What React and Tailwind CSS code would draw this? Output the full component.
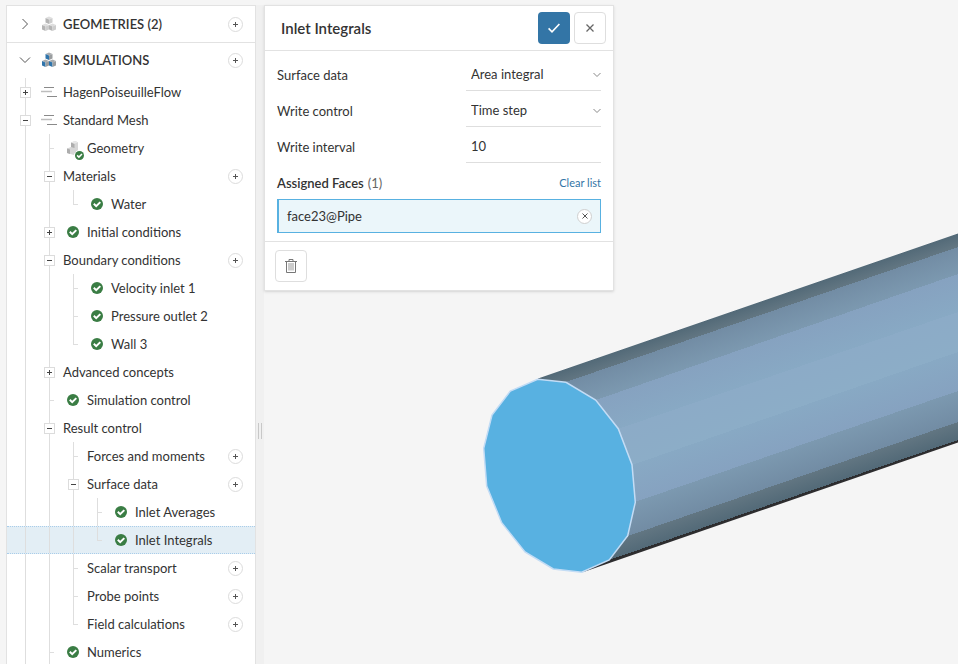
import React from 'react';

const treeItems = [
  { label: 'HagenPoiseuilleFlow', guides: [], depth: 0, toggle: 'plus', icon: 'lines' },
  { label: 'Standard Mesh', guides: [], depth: 0, toggle: 'minus', icon: 'lines' },
  { label: 'Geometry', guides: [0], depth: 1, icon: 'cube' },
  { label: 'Materials', guides: [0], depth: 1, toggle: 'minus', add: true },
  { label: 'Water', guides: [0, 1], depth: 2, icon: 'check', last: true },
  { label: 'Initial conditions', guides: [0], depth: 1, toggle: 'plus', icon: 'check' },
  { label: 'Boundary conditions', guides: [0], depth: 1, toggle: 'minus', add: true },
  { label: 'Velocity inlet 1', guides: [0, 1], depth: 2, icon: 'check' },
  { label: 'Pressure outlet 2', guides: [0, 1], depth: 2, icon: 'check' },
  { label: 'Wall 3', guides: [0, 1], depth: 2, icon: 'check', last: true },
  { label: 'Advanced concepts', guides: [0], depth: 1, toggle: 'plus' },
  { label: 'Simulation control', guides: [0], depth: 1, icon: 'check' },
  { label: 'Result control', guides: [0], depth: 1, toggle: 'minus' },
  { label: 'Forces and moments', guides: [0, 1], depth: 2, add: true },
  { label: 'Surface data', guides: [0, 1], depth: 2, toggle: 'minus', add: true },
  { label: 'Inlet Averages', guides: [0, 1, 2], depth: 3, icon: 'check' },
  { label: 'Inlet Integrals', guides: [0, 1, 2], depth: 3, icon: 'check', last: true, selected: true },
  { label: 'Scalar transport', guides: [0, 1], depth: 2, add: true },
  { label: 'Probe points', guides: [0, 1], depth: 2, add: true },
  { label: 'Field calculations', guides: [0, 1], depth: 2, add: true, last: true },
  { label: 'Numerics', guides: [0], depth: 1, icon: 'check' },
];

// one small cube: top, left and right face
const Cube = ({ x, y, left, right, top }) => (
  <g transform={`translate(${x} ${y})`}>
    <path d="M0 1.500L3.500 0 7 1.500 3.500 3z" fill={top} />
    <path d="M0 1.500L3.500 3v4.500L0 6z" fill={left} />
    <path d="M7 1.500L3.500 3v4.500L7 6z" fill={right} />
  </g>
);

const CubesIcon = ({ blue }) => {
  const left = blue ? '#2f74ab' : '#b4b4b4';
  const right = blue ? '#9a9d9f' : '#cdcdcd';
  const top = blue ? '#a9acae' : '#dedede';
  return (
    <svg width="16" height="16" viewBox="0 0 16 16" aria-hidden="true">
      <Cube x={4.5} y={0.5} left={left} right={right} top={top} />
      <Cube x={1} y={7.5} left={left} right={right} top={top} />
      <Cube x={8} y={7.5} left={left} right={right} top={top} />
    </svg>
  );
};

const CheckIcon = ({ size = 12 }) => (
  <svg width={size} height={size} viewBox="0 0 12 12" aria-hidden="true">
    <circle cx="6" cy="6" r="6" fill="#3a7d44" />
    <path d="M2.800 5.800l2.400 2.400L9.300 4.100" fill="none" stroke="#fff" strokeWidth="2" />
  </svg>
);

const LinesIcon = () => (
  <svg width="16" height="10" viewBox="0 0 16 10" aria-hidden="true">
    <path d="M3 0.500h10" stroke="#8a8a8a" />
    <path d="M0 4.500h11" stroke="#bdbdbd" strokeWidth="1.500" />
    <path d="M6 9.500h10" stroke="#8a8a8a" />
  </svg>
);

const CubeIcon = () => (
  <span className="relative block h-4 w-4">
    <svg className="block" width="16" height="16" viewBox="0 0 16 16" aria-hidden="true">
      <path d="M5 2.500L9 1l3 1.200V13l-4 2-7-2V8.500L5 7z" fill="#d6d6d6" />
      <path d="M5 2.500l3.500 1.200V8L5 7zM1 8.500l3 1V14l-3-1z" fill="#adadad" />
      <path d="M5 2.500L9 1l3 1.200-3.500 1.500z" fill="#e8e8e8" />
    </svg>
    <span className="absolute -right-[3px] -bottom-[5px] rounded-full border border-white bg-white">
      <CheckIcon size={9} />
    </span>
  </span>
);

const AddButton = ({ label }) => (
  <button
    aria-label={`Add ${label}`}
    className="relative mr-3 ml-auto flex h-[15px] w-[15px] shrink-0 items-center justify-center rounded-full border border-[#dcdcdc] bg-white"
  >
    <svg width="5" height="5" viewBox="0 0 5 5" aria-hidden="true">
      <path d="M0 2.500h5M2.500 0v5" stroke="#555" />
    </svg>
  </button>
);

const Toggle = ({ type, label }) => (
  <button aria-label={`Toggle ${label}`} className="relative flex h-[11px] w-[11px] items-center justify-center border border-[#dcdcdc] bg-white">
    <svg width="5" height="5" viewBox="0 0 5 5" aria-hidden="true">
      <path d={type === 'plus' ? 'M0 2.500h5M2.500 0v5' : 'M0 2.500h5'} stroke="#444" />
    </svg>
  </button>
);

const SectionHeader = ({ label, open, blue }) => (
  <div className="flex h-9 items-center">
    <button aria-label={`Toggle ${label}`} className="ml-3 flex w-3 justify-center">
      <svg width="12" height="12" viewBox="0 0 12 12" fill="none" stroke="#555" aria-hidden="true">
        <path d={open ? 'M1 3.500l5 5 5-5' : 'M3.500 1l5 5-5 5'} />
      </svg>
    </button>
    <span className="ml-[10px] w-[22px]"><CubesIcon blue={blue} /></span>
    <h2 className="font-semibold">{label}</h2>
    <AddButton label={label} />
  </div>
);

const Guide = ({ end, stub }) => (
  <span className="relative flex w-6 shrink-0 justify-center self-stretch">
    <span className={`w-px bg-[#dedede] ${end ? 'h-1/2' : 'h-full'}`} />
    {stub && <span className="absolute top-1/2 left-1/2 h-px w-[5px] bg-[#dedede]" />}
  </span>
);

const TreeRow = ({ item }) => (
  <li className={`flex h-7 items-center pl-[6px] ${item.selected ? 'border-y border-dotted border-[#a9cdea] bg-[#e3eef5]' : ''}`}>
    {item.guides.map((g) => <Guide key={g} />)}
    <span className="relative flex w-6 shrink-0 items-center justify-center self-stretch">
      <span className="absolute inset-0 flex justify-center">
        <Guide end={item.last} stub={!item.toggle} />
      </span>
      {item.toggle && <Toggle type={item.toggle} label={item.label} />}
    </span>
    {item.icon === 'lines' && <span className="ml-1 w-[22px]"><LinesIcon /></span>}
    {item.icon === 'cube' && <span className="ml-[5px] w-[21px]"><CubeIcon /></span>}
    {item.icon === 'check' && <span className="ml-[6px] w-5"><CheckIcon /></span>}
    <span className={item.icon ? 'whitespace-nowrap' : 'ml-[2px] whitespace-nowrap'}>{item.label}</span>
    {item.add && <AddButton label={item.label} />}
  </li>
);

const Sidebar = () => (
  <aside className="relative w-[250px] shrink-0 overflow-hidden border border-b-0 border-[#e2e2e2] bg-white">
    <SectionHeader label="GEOMETRIES (2)" />
    <div className="-mb-px border-t border-[#e2e2e2]" />
    <SectionHeader label="SIMULATIONS" open blue />
    <ul>
      {treeItems.map((item) => <TreeRow key={item.label} item={item} />)}
    </ul>
  </aside>
);

const SelectField = ({ id, label, value, options }) => (
  <div className="flex h-9 items-start justify-between">
    <label htmlFor={id} className="pt-[10px]">{label}</label>
    <div className="relative w-[135px] border-b border-[#dedede]">
      <select id={id} defaultValue={value} className="h-[35px] w-full appearance-none bg-transparent pt-[3px] pl-[5px] outline-none">
        {options.map((o) => <option key={o}>{o}</option>)}
      </select>
      <svg className="pointer-events-none absolute top-[17px] right-0" width="8" height="6" viewBox="0 0 8 6" fill="none" stroke="#888" aria-hidden="true">
        <path d="M0.500 1L4 4.500 7.500 1" />
      </svg>
    </div>
  </div>
);

const Panel = () => (
  <section className="relative w-[350px] border border-[#e2e2e2] bg-white shadow-sm">
    <header className="flex h-[45px] items-center border-b border-[#e2e2e2] pr-[7px] pl-4">
      <h1 className="grow text-[15px] font-semibold">Inlet Integrals</h1>
      <button aria-label="Apply" className="mr-1 flex h-8 w-8 items-center justify-center rounded bg-[#3375a6]">
        <svg width="12" height="10" viewBox="0 0 12 10" fill="none" stroke="#fff" strokeWidth="1.600" aria-hidden="true">
          <path d="M0.600 5.400L4 8.800 11.400 1" />
        </svg>
      </button>
      <button aria-label="Close" className="flex h-8 w-8 items-center justify-center rounded border border-[#dedede] bg-white">
        <svg width="8" height="8" viewBox="0 0 8 8" stroke="#666" strokeWidth="1.300" aria-hidden="true">
          <path d="M0.500 0.500l7 7M7.500 0.500l-7 7" />
        </svg>
      </button>
    </header>
    <div className="px-3 pt-1 pb-2">
      <SelectField id="surface-data" label="Surface data" value="Area integral" options={['Area integral', 'Area average']} />
      <SelectField id="write-control" label="Write control" value="Time step" options={['Time step', 'Run time']} />
      <div className="flex h-9 items-start justify-between">
        <label htmlFor="write-interval" className="pt-[10px]">Write interval</label>
        <input id="write-interval" defaultValue="10" className="h-9 w-[135px] border-b border-[#dedede] bg-transparent pt-[3px] pl-[5px] outline-none" />
      </div>
      <div className="flex h-9 items-center justify-between pt-1">
        <h2><span className="mr-1 font-semibold">Assigned Faces</span><span className="text-[#666]">(1)</span></h2>
        <button className="text-[11px] text-[#3375a6]">Clear list</button>
      </div>
      <div className="flex h-[34px] items-center justify-between border border-l-2 border-[#58b1e1] bg-[#ebf6fa] px-2">
        <span>face23@Pipe</span>
        <button aria-label="Remove face23@Pipe" className="flex h-[15px] w-[15px] items-center justify-center rounded-full border border-[#cfcfcf] bg-white">
          <svg width="6" height="6" viewBox="0 0 6 6" stroke="#555" aria-hidden="true">
            <path d="M0.500 0.500l5 5M5.500 0.500l-5 5" />
          </svg>
        </button>
      </div>
    </div>
    <footer className="border-t border-[#e2e2e2] px-[10px] py-2">
      <button aria-label="Delete" className="flex h-8 w-8 items-center justify-center rounded border border-[#dedede] bg-white">
        <svg width="12" height="14" viewBox="0 0 12 14" fill="none" stroke="#777" aria-hidden="true">
          <path d="M0 2.500h12M4 2V0.500h4V2M1.500 2.500v11h9v-11" />
          <path d="M4 4v7.500M6 4v7.500M8 4v7.500" stroke="#999" />
        </svg>
      </button>
    </footer>
  </section>
);

// side strips of the pipe, top to bottom, with the shade at their upper and lower edge
const strips = [
  { points: '538,379 958,234 958,247 566,382', edge: [538, 379, 566, 382], from: '#536a78', to: '#627682' },
  { points: '566,382 958,247 958,274 596,400', edge: [566, 382, 596, 400], from: '#728ca4', to: '#7c99b0' },
  { points: '596,400 958,274 958,312 618,429', edge: [596, 400, 618, 429], from: '#86a2c0', to: '#88a9c4' },
  { points: '618,429 958,312 958,352 632,465', edge: [618, 429, 632, 465], from: '#8cabc7', to: '#8cadc7' },
  { points: '632,465 958,352 958,391 635,502', edge: [632, 465, 635, 502], from: '#88a9c4', to: '#86a2c0' },
  { points: '635,502 958,391 958,422 628,536', edge: [635, 502, 628, 536], from: '#7c99b0', to: '#728ca4' },
  { points: '628,536 958,422 958,440 609,560', edge: [628, 536, 609, 560], from: '#627682', to: '#536a78' },
];

// end point of the gradient, taken at right angles to the pipe's axis
const gradientEnd = ([x1, y1, x2, y2]) => {
  const nx = 0.327;
  const ny = 0.945;
  const d = (x2 - x1) * nx + (y2 - y1) * ny;
  return { x2: x1 + nx * d, y2: y1 + ny * d };
};

const PipeView = () => (
  <svg className="absolute inset-0 h-full w-full" viewBox="264 0 694 664" preserveAspectRatio="xMaxYMid slice" role="img" aria-label="Pipe">
    <defs>
      {strips.map((s, i) => (
        <linearGradient key={i} id={`strip${i}`} gradientUnits="userSpaceOnUse" x1={s.edge[0]} y1={s.edge[1]} {...gradientEnd(s.edge)}>
          <stop offset="0" stopColor={s.from} />
          <stop offset="1" stopColor={s.to} />
        </linearGradient>
      ))}
    </defs>
    <path d="M582 572.500L609 558 958 438v4.500z" fill="#2d2d2f" />
    <path d="M538 379L958 234" stroke="#536a78" />
    <g shapeRendering="crispEdges">
      {strips.map((s, i) => <polygon key={i} points={s.points} fill={`url(#strip${i})`} />)}
    </g>
    <polygon
      points="537.700,379.300 566,382.300 595.700,400 618.300,428.700 632,464.700 635.300,502.300 627.700,535.700 609.300,560 581.700,572.300 553.300,569 525,552 501.700,522.700 486.700,486 483.700,448.300 492,415 510.300,391"
      fill="#58b1e1"
      stroke="#c3dcf5"
      strokeWidth="1.500"
    />
  </svg>
);

export default function App() {
  return (
    <div className="flex h-screen overflow-hidden bg-[#f5f5f5] pt-[5px] pl-[6px] font-['Lato',sans-serif] text-[13px] leading-5 text-[#333]">
      <Sidebar />
      <div className="flex w-2 shrink-0 items-center justify-center bg-[#f0f0f0] pt-[192px]">
        <span className="h-4 w-1 border-x border-[#c8c8c8]" />
      </div>
      <main className="relative -mt-[5px] grow pt-[5px]">
        <PipeView />
        <Panel />
      </main>
    </div>
  );
}
